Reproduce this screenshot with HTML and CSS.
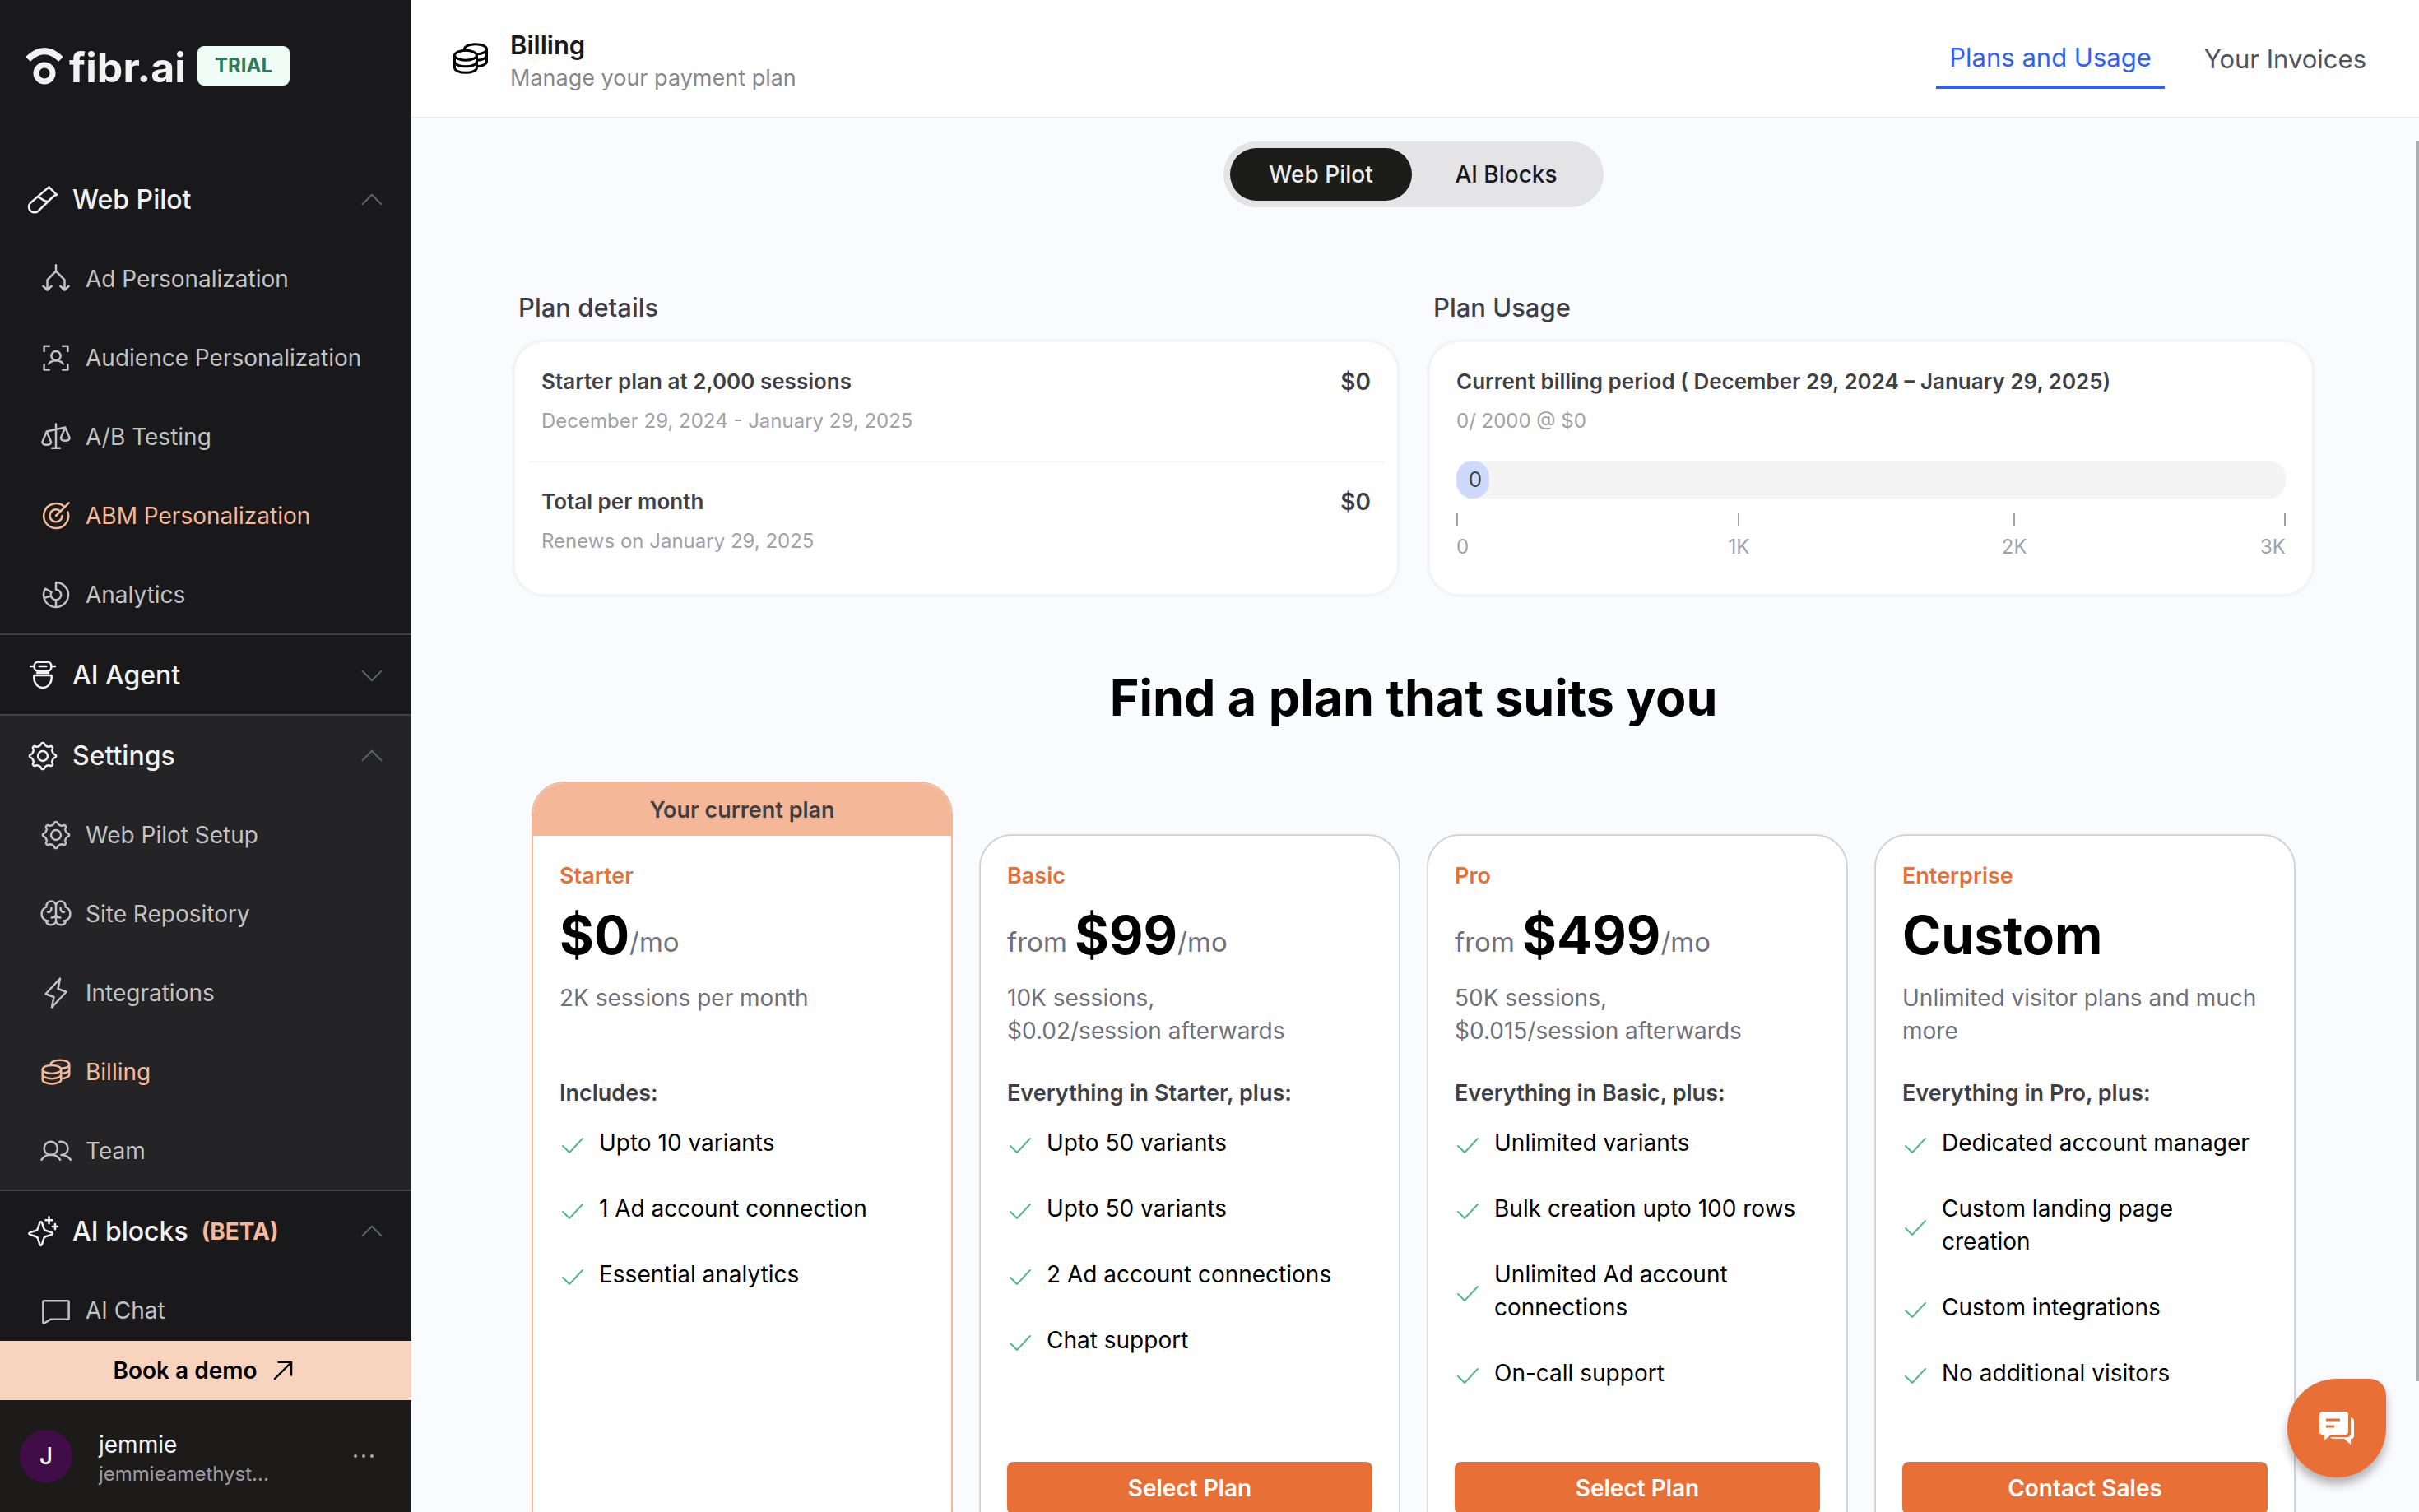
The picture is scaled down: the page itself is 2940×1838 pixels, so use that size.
FILE: index.html
```html
<!DOCTYPE html>
<html lang="en">
<head>
<meta charset="utf-8">
<title>Billing</title>
<link rel="stylesheet" href="styles.css">
</head>
<body>
<svg class="sprite" aria-hidden="true">
  <symbol id="i-tube" viewBox="0 0 256 256"><path d="M176 28l61 61-22 7L92 216a44 44 0 0 1-62-62ZM86 104c26 0 40 40 84 36"/></symbol>
  <symbol id="i-split" viewBox="0 0 256 256"><path d="M128 20v48M61 216v-80l67-68 67 68v80M28 184l33 32 33-32M162 184l33 32 33-32"/></symbol>
  <symbol id="i-focus" viewBox="0 0 256 256"><path d="M180 36h40v40M180 220h40v-40M76 220H36v-40M76 36H36v40M72 176c10-18 30-28 56-28s46 10 56 28"/><circle cx="128" cy="112" r="36"/></symbol>
  <symbol id="i-scales" viewBox="0 0 256 256"><path d="M128 28v188M96 216h64M56 86l144-32M56 86l-34 82c0 16 16 22 34 22s34-6 34-22ZM200 54l-34 82c0 16 16 22 34 22s34-6 34-22Z"/></symbol>
  <symbol id="i-target" viewBox="0 0 256 256"><path d="M128 128l100-100M192 56a96 96 0 1 0 28 42M163 94a48 48 0 1 0 13 34"/></symbol>
  <symbol id="i-donut" viewBox="0 0 256 256"><path d="M128 88V32a96 96 0 1 1-83 48l48 28a40 40 0 1 0 35-20ZM128 168v56M90 138l-54 15"/></symbol>
  <symbol id="i-agent" viewBox="0 0 256 256"><rect x="62" y="24" width="132" height="70" rx="28"/><path d="M32 58h26M198 58h26M100 58h56M84 108h88M60 128h136c6 60-30 96-68 96s-74-36-68-96Z"/></symbol>
  <symbol id="i-gear" viewBox="0 0 256 256">
    <circle cx="128" cy="128" r="38"/>
    <g id="tooth2"><g id="tooth"><path d="M97 52c9-3 14-5 16-12 2-10 6-15 15-15s13 5 15 15c2 7 7 9 16 12"/><path transform="rotate(45 128 128)" d="M97 52c9-3 14-5 16-12 2-10 6-15 15-15s13 5 15 15c2 7 7 9 16 12"/></g>
    <use href="#tooth" transform="rotate(90 128 128)"/></g>
    <use href="#tooth2" transform="rotate(180 128 128)"/>
  </symbol>
  <symbol id="i-brain" viewBox="0 0 256 256"><path d="M128 188V66a37 37 0 0 0-74 0v8a56 56 0 0 0-4 104M50 178a40 40 0 0 0 78 6M206 178a40 40 0 0 1-78 6M128 66a37 37 0 0 1 74 0v8a56 56 0 0 1 4 104M50 178q8 4 20 4M206 178q-8 4-20 4M92 82v8a24 24 0 0 1-28 24M164 82v8a24 24 0 0 0 28 24M128 128c0 20-14 28-34 28M128 128c0 20 14 28 34 28"/></symbol>
  <symbol id="i-bolt" viewBox="0 0 256 256"><path d="M160 16l-16 80 64 24L96 240l16-80-64-24Z"/></symbol>
  <symbol id="i-coins" viewBox="0 0 256 256"><ellipse cx="96" cy="108" rx="72" ry="32"/><path d="M24 108v80c0 18 32 32 72 32s72-14 72-32v-80M24 148c0 18 32 32 72 32s72-14 72-32M88 77v-9c0-18 32-32 72-32s72 14 72 32-27 30-65 32M232 68v80c0 17-28 30-64 32M232 108c0 17-28 30-64 32"/></symbol>
  <symbol id="i-users" viewBox="0 0 256 256"><circle cx="88" cy="108" r="52"/><path d="M155 58a54 54 0 0 1 14-2 52 52 0 0 1 0 104M16 197a88 88 0 0 1 145 0M169 160a88 88 0 0 1 73 37"/></symbol>
  <symbol id="i-sparkle" viewBox="0 0 256 256"><path d="M113 52q6 0 9 9l15 46q3 10 12 13l46 15q10 3 10 9t-10 9l-46 15q-9 3-12 12l-15 46q-3 10-9 10t-9-10l-15-46q-3-9-12-12l-46-15q-10-3-10-9t10-9l46-15q9-3 12-13l15-46q3-9 9-9ZM176 14v52M150 40h52M224 70v40M204 90h40"/></symbol>
  <symbol id="i-chat" viewBox="0 0 256 256"><path d="M36 52h184q8 0 8 8v128q0 8-8 8H88l-50 30q-10 4-10-6V60q0-8 8-8Z"/></symbol>
  <symbol id="i-up" viewBox="0 0 256 256"><path d="M48 164l80-80 80 80"/></symbol>
  <symbol id="i-down" viewBox="0 0 256 256"><path d="M48 92l80 80 80-80"/></symbol>
  <symbol id="i-out" viewBox="0 0 256 256"><path d="M56 200L200 56M88 56h112v112"/></symbol>
  <symbol id="i-check" viewBox="0 0 28 28"><path d="M2 14l8 8L26 5"/></symbol>
</svg>

<div class="app">
  <aside class="sidebar">
    <div class="brand">
      <svg class="brand-mark" viewBox="0 0 44 48" aria-hidden="true"><path d="M2 16Q22-4 42 16" stroke-width="8"/><circle cx="22" cy="33" r="10" stroke-width="7"/></svg>
      <span class="brand-name">fibr.ai</span>
      <span class="badge">TRIAL</span>
    </div>
    <nav class="nav">
      <section class="group">
        <button class="group-head"><svg class="icon"><use href="#i-tube"/></svg><span>Web Pilot</span><svg class="caret"><use href="#i-up"/></svg></button>
        <a class="item" href="#"><svg class="icon"><use href="#i-split"/></svg>Ad Personalization</a>
        <a class="item" href="#"><svg class="icon"><use href="#i-focus"/></svg>Audience Personalization</a>
        <a class="item" href="#"><svg class="icon"><use href="#i-scales"/></svg>A/B Testing</a>
        <a class="item accent" href="#"><svg class="icon"><use href="#i-target"/></svg>ABM Personalization</a>
        <a class="item" href="#"><svg class="icon"><use href="#i-donut"/></svg>Analytics</a>
      </section>
      <section class="group">
        <button class="group-head"><svg class="icon"><use href="#i-agent"/></svg><span>AI Agent</span><svg class="caret"><use href="#i-down"/></svg></button>
      </section>
      <section class="group open">
        <button class="group-head"><svg class="icon"><use href="#i-gear"/></svg><span>Settings</span><svg class="caret"><use href="#i-up"/></svg></button>
        <a class="item" href="#"><svg class="icon"><use href="#i-gear"/></svg>Web Pilot Setup</a>
        <a class="item" href="#"><svg class="icon"><use href="#i-brain"/></svg>Site Repository</a>
        <a class="item" href="#"><svg class="icon"><use href="#i-bolt"/></svg>Integrations</a>
        <a class="item accent" href="#"><svg class="icon"><use href="#i-coins"/></svg>Billing</a>
        <a class="item" href="#"><svg class="icon"><use href="#i-users"/></svg>Team</a>
      </section>
      <section class="group">
        <button class="group-head"><svg class="icon"><use href="#i-sparkle"/></svg><span>AI blocks</span><span class="beta">(BETA)</span><svg class="caret"><use href="#i-up"/></svg></button>
        <a class="item" href="#"><svg class="icon"><use href="#i-chat"/></svg>AI Chat</a>
      </section>
    </nav>
    <a class="demo" href="#">Book a demo<svg class="out"><use href="#i-out"/></svg></a>
    <div class="user">
      <span class="avatar">J</span>
      <div class="user-text"><span class="user-name">jemmie</span><span class="user-mail">jemmieamethyst...</span></div>
      <button class="more" aria-label="Account menu"><i></i><i></i><i></i></button>
    </div>
  </aside>

  <div class="main">
    <header class="topbar">
      <svg class="icon topicon"><use href="#i-coins"/></svg>
      <div class="title"><h1>Billing</h1><p>Manage your payment plan</p></div>
      <nav class="tabs"><a class="tab active" href="#">Plans and Usage</a><a class="tab" href="#">Your Invoices</a></nav>
    </header>
    <main class="content">
      <div class="toggle"><button class="toggle-btn on">Web Pilot</button><button class="toggle-btn">AI Blocks</button></div>
      <div class="summary">
        <section>
          <h2 class="label">Plan details</h2>
          <div class="panel">
            <div class="line"><div class="pair"><span>Starter plan at 2,000 sessions</span><span class="amount">$0</span></div><p class="muted">December 29, 2024 - January 29, 2025</p></div>
            <div class="line"><div class="pair"><span>Total per month</span><span class="amount">$0</span></div><p class="muted">Renews on January 29, 2025</p></div>
          </div>
        </section>
        <section>
          <h2 class="label">Plan Usage</h2>
          <div class="panel">
            <div class="line"><div class="pair"><span>Current billing period ( December 29, 2024 – January 29, 2025)</span></div><p class="muted">0/ 2000 @ $0</p>
              <div class="meter"><span class="fill">0</span></div>
              <div class="scale"><span>0</span><span>1K</span><span>2K</span><span>3K</span></div>
            </div>
          </div>
        </section>
      </div>
      <h2 class="headline">Find a plan that suits you</h2>
      <div class="plans">
        <article class="plan current">
          <div class="ribbon">Your current plan</div>
          <div class="plan-body">
            <h3>Starter</h3>
            <p class="price"><strong>$0</strong><span>/mo</span></p>
            <p class="desc">2K sessions per month</p>
            <h4>Includes:</h4>
            <ul>
              <li><svg class="check"><use href="#i-check"/></svg>Upto 10 variants</li>
              <li><svg class="check"><use href="#i-check"/></svg>1 Ad account connection</li>
              <li><svg class="check"><use href="#i-check"/></svg>Essential analytics</li>
            </ul>
          </div>
        </article>
        <article class="plan">
          <div class="plan-body">
            <h3>Basic</h3>
            <p class="price"><span>from&nbsp;</span><strong>$99</strong><span>/mo</span></p>
            <p class="desc">10K sessions,<br>$0.02/session afterwards</p>
            <h4>Everything in Starter, plus:</h4>
            <ul>
              <li><svg class="check"><use href="#i-check"/></svg>Upto 50 variants</li>
              <li><svg class="check"><use href="#i-check"/></svg>Upto 50 variants</li>
              <li><svg class="check"><use href="#i-check"/></svg>2 Ad account connections</li>
              <li><svg class="check"><use href="#i-check"/></svg>Chat support</li>
            </ul>
            <button class="cta">Select Plan</button>
          </div>
        </article>
        <article class="plan">
          <div class="plan-body">
            <h3>Pro</h3>
            <p class="price"><span>from&nbsp;</span><strong>$499</strong><span>/mo</span></p>
            <p class="desc">50K sessions,<br>$0.015/session afterwards</p>
            <h4>Everything in Basic, plus:</h4>
            <ul>
              <li><svg class="check"><use href="#i-check"/></svg>Unlimited variants</li>
              <li><svg class="check"><use href="#i-check"/></svg>Bulk creation upto 100 rows</li>
              <li><svg class="check"><use href="#i-check"/></svg>Unlimited Ad account<br>connections</li>
              <li><svg class="check"><use href="#i-check"/></svg>On-call support</li>
            </ul>
            <button class="cta">Select Plan</button>
          </div>
        </article>
        <article class="plan">
          <div class="plan-body">
            <h3>Enterprise</h3>
            <p class="price"><strong>Custom</strong></p>
            <p class="desc">Unlimited visitor plans and much more</p>
            <h4>Everything in Pro, plus:</h4>
            <ul>
              <li><svg class="check"><use href="#i-check"/></svg>Dedicated account manager</li>
              <li><svg class="check"><use href="#i-check"/></svg>Custom landing page<br>creation</li>
              <li><svg class="check"><use href="#i-check"/></svg>Custom integrations</li>
              <li><svg class="check"><use href="#i-check"/></svg>No additional visitors</li>
            </ul>
            <button class="cta">Contact Sales</button>
          </div>
        </article>
      </div>
    </main>
    <div class="scroll-thumb"></div>
  </div>
</div>
<button class="fab" aria-label="Open chat">
  <svg viewBox="0 0 42 40" aria-hidden="true"><path fill="#fff" d="M5 0h26q4 0 4 4v20q0 4-4 4H14l-8 7v-7H4q-4 0-4-4V4q0-4 5-4Z"/><path fill="#fff" d="M38 7q4 1 4 4v18q0 4-3 4h-1v7l-8-7H17q-3 0-4-2h20q5 0 5-5Z"/><path stroke="#e86f36" stroke-width="3" d="M8 10h17M8 18h10"/></svg>
</button>
</body>
</html>
```
FILE: styles.css
```css
* { box-sizing: border-box; }
body, h1, h2, h3, h4, p, ul { margin: 0; padding: 0; }
html, body { height: 100%; overflow: hidden; }
body {
  font-family: Inter, "Open Sans", sans-serif;
  font-size: 28px;
  line-height: 40px;
  color: #3f3f46;
  background: #fafbfe;
}
button { font: inherit; color: inherit; border: 0; padding: 0; background: none; }
a { color: inherit; text-decoration: none; }
ul { list-style: none; }
.sprite { display: none; }
svg { flex: none; fill: none; stroke: currentColor; stroke-width: 16; stroke-linecap: round; stroke-linejoin: round; }
.app { display: flex; height: 100vh; }

/* Sidebar */
.sidebar { flex: none; width: 500px; display: flex; flex-direction: column; background: #19191b; color: #c2c2c4; }
.brand { flex: none; height: 194px; padding: 56px 32px 0; display: flex; align-items: flex-start; gap: 8px; color: #f2f2f2; }
.brand-mark { width: 44px; height: 48px; stroke-linecap: butt; }
.brand-name { font-size: 50px; line-height: 52px; font-weight: 700; }
.badge { margin-left: auto; width: 112px; margin-right: 116px; border-radius: 8px; background: #f0fdf6; color: #2f7a58; font-size: 24px; line-height: 48px; font-weight: 700; text-align: center; }
.nav { flex: 1; min-height: 0; overflow: hidden; }
.group + .group { border-top: 2px solid #3f3f45; }
.open { background: #242426; }
.group-head { width: 100%; height: 96px; padding: 2px 30px 0 32px; display: flex; align-items: center; gap: 16px; font-size: 32px; font-weight: 500; color: #f2f2f2; text-align: left; }
.item { height: 96px; padding: 2px 0 0 48px; display: flex; align-items: center; gap: 16px; }
.accent, .beta { color: #f5b898; }
.beta { font-size: 28px; font-weight: 700; }
.icon { width: 40px; height: 40px; }
.caret { width: 36px; height: 36px; margin-left: auto; color: #5b5f6b; }
.demo { flex: none; height: 72px; display: flex; align-items: center; justify-content: center; gap: 14px; background: #f8d3bd; color: #000; font-weight: 600; }
.out { width: 36px; height: 36px; }
.user { flex: none; height: 136px; padding: 0 46px 0 24px; display: flex; align-items: center; gap: 32px; background: #1d1b1a; }
.avatar { width: 64px; height: 64px; border-radius: 50%; background: #410d48; color: #fff; line-height: 64px; text-align: center; font-weight: 500; }
.user-text { display: flex; flex-direction: column; padding-top: 8px; }
.user-name { color: #f2f2f2; line-height: 36px; }
.user-mail { color: #9b9ba4; font-size: 24px; line-height: 36px; }
.more { display: flex; gap: 6px; margin-left: auto; }
.more i { width: 4px; height: 4px; border-radius: 50%; background: #a6a6ac; }

/* Header */
.main { flex: 1; min-width: 0; display: flex; flex-direction: column; position: relative; }
.topbar { flex: none; height: 144px; padding: 0 32px 0 48px; display: flex; align-items: center; gap: 24px; background: #fff; border-bottom: 2px solid #ebebeb; color: #000; }
.topicon { width: 48px; height: 48px; }
.title h1 { font-size: 31px; line-height: 40px; font-weight: 600; color: #19191b; }
.title p { color: #87878b; font-size: 27px; }
.title { padding-top: 8px; }
.tabs { margin-left: auto; display: flex; gap: 16px; font-size: 31px; }
.tab { padding: 18px 32px 16px; color: #52525b; }
.active { padding: 16px 16px 14px; border-bottom: 4px solid #2f62f1; color: #2f62f1; }

/* Content */
.content { flex: 1; min-height: 0; overflow: hidden; padding: 28px 126px 0 122px; }
.toggle { width: 462px; height: 80px; margin: 0 auto; padding: 8px; border-radius: 40px; background: #e4e4e7; display: flex; gap: 4px; color: #19191b; font-weight: 500; }
.toggle-btn { flex: 1; border-radius: 32px; }
.on { background: #1c1c18; color: #ececec; }
.summary { margin-top: 102px; display: grid; grid-template-columns: 1fr 1fr; gap: 32px; }
.label { padding-left: 8px; font-size: 31px; line-height: 40px; font-weight: 500; }
.panel { margin-top: 18px; height: 314px; padding: 0 16px; border: 4px solid #f4f4f4; border-radius: 40px; background: #fff; }
.line { padding: 24px 16px; }
.line + .line { border-top: 2px solid #f4f4f4; }
.pair { display: flex; justify-content: space-between; font-size: 26px; line-height: 48px; font-weight: 600; }
.amount { font-size: 28px; }
.muted { color: #a1a1aa; font-size: 24px; line-height: 48px; }
.meter { margin-top: 24px; height: 46px; border-radius: 20px; background: #f4f4f4; }
.fill { display: block; width: 40px; border-radius: 20px; background: #cddafb; font-size: 26px; line-height: 46px; text-align: center; padding-left: 6px; }
.scale { margin-top: 18px; display: flex; justify-content: space-between; color: #a1a1aa; font-size: 24px; line-height: 50px; }
.scale span { display: flex; flex-direction: column; align-items: center; }
.scale span::before { content: ""; width: 2px; height: 16px; background: #a1a1aa; }
.scale span:first-child { width: 24px; align-items: flex-start; }
.scale span:last-child { width: 8px; align-items: flex-end; }
.headline { margin-top: 82px; text-align: center; font-size: 61px; line-height: 80px; font-weight: 700; color: #000; }

/* Plans */
.plans { margin: 62px 24px 0; display: grid; grid-template-columns: repeat(4, 1fr); gap: 32px; }
.plan { margin-top: 64px; border: 2px solid #d4d4d8; border-radius: 40px; background: #fff; }
.current { margin-top: 0; border-color: #f4b898; overflow: hidden; }
.ribbon { height: 64px; line-height: 66px; text-align: center; font-size: 27px; font-weight: 600; background: #f4b898; }
.plan-body { padding: 29px 32px 32px; }
.plan h3 { font-size: 27px; line-height: 40px; font-weight: 600; color: #e86f36; }
.price { height: 80px; margin: 12px 0 16px; display: flex; align-items: center; color: #71717a; font-size: 33px; }
.price strong { font-size: 64px; line-height: 80px; font-weight: 700; color: #000; }
.price span { line-height: 40px; padding-top: 16px; }
.desc { height: 80px; color: #71717a; }
.plan h4 { margin-top: 36px; font-size: 27px; line-height: 40px; font-weight: 600; }
.plan ul { margin-top: 20px; height: 348px; display: flex; flex-direction: column; gap: 40px; color: #000; }
.plan li { display: flex; align-items: center; gap: 16px; }
.check { width: 32px; height: 28px; margin-top: 8px; color: #58b78d; stroke-width: 2; }
.cta { width: 100%; height: 64px; margin-top: 60px; border-radius: 8px; background: #e86f36; color: #fff; font-weight: 600; }
.scroll-thumb { position: absolute; top: 172px; right: 0; width: 4px; height: 82%; background: #adadb0; }
.fab { position: fixed; right: 40px; bottom: 42px; width: 120px; height: 120px; border-radius: 60px 20px 60px 60px; background: #e86f36; box-shadow: 0 8px 12px rgba(0, 0, 0, .3); display: flex; align-items: center; justify-content: center; }
.fab svg { width: 42px; height: 40px; stroke: none; stroke-linecap: butt; }
```
